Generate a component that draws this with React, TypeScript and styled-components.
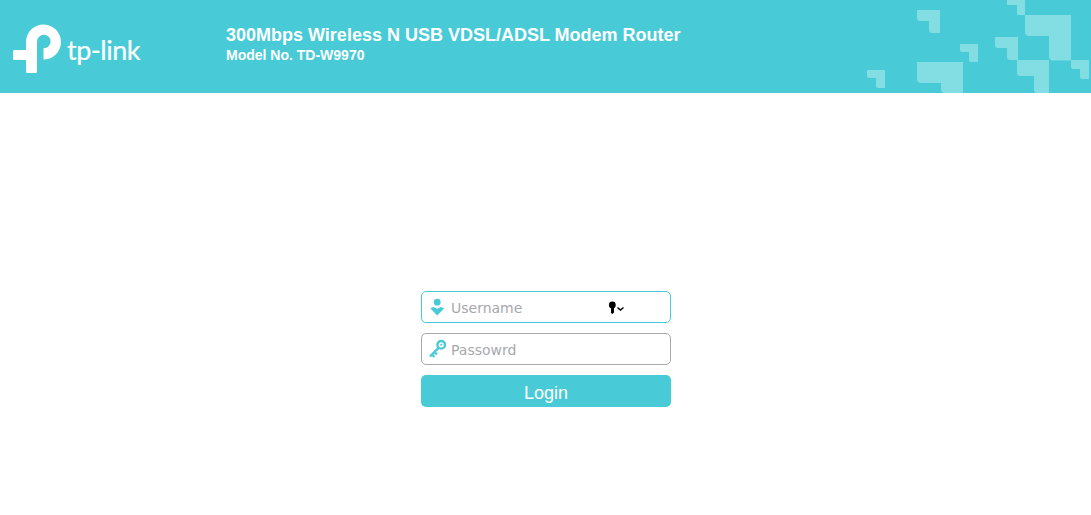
import React from "react";
import styled, { createGlobalStyle } from "styled-components";

const Global = createGlobalStyle`
  html, body { margin: 0; padding: 0; background: #fff; }
  body { font-family: "Liberation Sans", Arial, sans-serif; }
`;

const Page = styled.div`
  min-height: 515px;
  display: flex;
  flex-direction: column;
`;

const Header = styled.header`
  position: relative;
  height: 93px;
  background: #48cbd6;
  display: flex;
  align-items: center;
  overflow: hidden;
`;

const Pattern = styled.svg`
  position: absolute;
  top: 0;
  right: 0;
  width: 241px;
  height: 93px;
`;

const LogoBlock = styled.div`
  width: 226px;
  height: 93px;
  flex: none;
  display: flex;
  align-items: flex-start;
  padding: 24px 0 0 13px;
  box-sizing: border-box;
`;

const LogoMark = styled.svg`
  width: 48px;
  height: 49px;
  flex: none;
`;

const LogoWord = styled.span`
  font-family: "Lato", sans-serif;
  font-weight: 400;
  font-size: 27px;
  line-height: 32px;
  letter-spacing: -0.5px;
  -webkit-text-stroke: 0.2px #fff;
  color: #fff;
  margin: 10px 0 0 6px;
`;

const Titles = styled.div`
  color: #fff;
  font-weight: 700;
  margin-top: -5px;
`;

const Title = styled.div`
  font-size: 18px;
  line-height: 22px;
  margin-top: 1px;
`;

const Model = styled.div`
  font-size: 14px;
  line-height: 20px;
  margin-top: -1px;
`;

const Main = styled.main`
  display: flex;
  justify-content: center;
  padding-top: 198px;
`;

const Form = styled.form`
  width: 250px;
  margin-left: 1px;
  display: flex;
  flex-direction: column;
  gap: 10px;
`;

const Field = styled.label<{ $active?: boolean }>`
  height: 32px;
  box-sizing: border-box;
  border: 1px solid ${(p) => (p.$active ? "#48cbd6" : "#a7a9ac")};
  border-radius: 5px;
  display: flex;
  align-items: center;
  background: #fff;
`;

const FieldIcon = styled.svg`
  width: 28px;
  height: 30px;
  flex: none;
  margin-right: 1px;
`;

const Input = styled.input`
  flex: 1;
  min-width: 0;
  border: 0;
  outline: 0;
  padding: 2px 0 0;
  background: transparent;
  font-family: "DejaVu Sans", Verdana, sans-serif;
  font-size: 14px;
  color: #333;
  &::placeholder { color: #a7a9ac; opacity: 1; }
`;

const KeychainIcon = styled.svg`
  width: 17px;
  height: 14px;
  flex: none;
  margin-right: 46px;
`;

const Login = styled.button`
  height: 32px;
  border: 0;
  border-radius: 5px;
  background: #48cbd6;
  color: #fff;
  font-family: "Liberation Sans", Arial, sans-serif;
  font-size: 18px;
  padding: 4px 0 0;
`;

const elbows = [
  [157, 0, 175, 15, 8, 5, 1],
  [67, 10, 90, 33, 11, 11, 3],
  [175, 15, 221, 60.5, 22, 21, 4],
  [110, 44, 128, 62, 9, 8, 2],
  [145, 37, 168, 60, 11, 11, 3],
  [221, 60, 239, 79, 9, 9, 2],
  [167, 60, 199, 93, 15, 16, 3],
  [67, 62, 113, 93, 22, 21, 4],
  [17, 70, 35, 88, 9, 8, 2],
];

function elbowPath([x0, y0, x1, y1, tx, ty, r]: number[]) {
  return `M${x0} ${y0}H${x1}V${y1}H${x1 - tx + r}Q${x1 - tx} ${y1} ${x1 - tx} ${y1 - r}V${y0 + ty}H${x0 + r}Q${x0} ${y0 + ty} ${x0} ${y0 + ty - r}Z`;
}

export default function App() {
  return (
    <Page>
      <Global />
      <Header>
        <LogoBlock>
          <LogoMark viewBox="13 24 48 49">
            <path d="M14.5 50H36V60H14.5Q13 60 13 58.5V51.5Q13 50 14.5 50Z" fill="#fff" />
            <path
              d="M26 71.5V41.5A17.5 17.5 0 1 1 43.5 59.5V48.3A6.8 6.8 0 1 0 37 41.5V71.5Q37 73 35.5 73H27.5Q26 73 26 71.5Z"
              fill="#fff"
            />
          </LogoMark>
          <LogoWord>tp-link</LogoWord>
        </LogoBlock>
        <Titles>
          <Title>300Mbps Wireless N USB VDSL/ADSL Modem Router</Title>
          <Model>Model No. TD-W9970</Model>
        </Titles>
        <Pattern viewBox="0 0 241 93">
          {elbows.map((e, i) => (
            <path key={i} d={elbowPath(e)} fill="#82dee3" />
          ))}
        </Pattern>
      </Header>
      <Main>
        <Form onSubmit={(e) => e.preventDefault()}>
          <Field $active>
            <FieldIcon viewBox="0 0 28 30">
              <circle cx="15.2" cy="10.2" r="3.4" fill="#48cbd6" />
              <path d="M8.3 16.3L11.5 15L15.2 16.8L19 15L22.2 16.3L15.2 23.5Z" fill="#48cbd6" />
            </FieldIcon>
            <Input placeholder="Username" />
            <KeychainIcon viewBox="0 0 17 14">
              <circle cx="5.3" cy="5" r="3.4" fill="#000" />
              <path d="M4 7H7V12.5L5.5 14L4 13Z" fill="#000" />
              <path d="M10.5 7.5L13.5 10L16.5 7.5" fill="none" stroke="#000" strokeWidth="1.4" />
            </KeychainIcon>
          </Field>
          <Field>
            <FieldIcon viewBox="0 0 28 30">
              <circle cx="19.2" cy="10.8" r="3.8" fill="none" stroke="#48cbd6" strokeWidth="2.4" />
              <circle cx="19.2" cy="10.8" r="1" fill="#48cbd6" />
              <path d="M16.5 13.8L8 22.5M10 20.5L12.5 23M12.5 18L15 20.5" fill="none" stroke="#48cbd6" strokeWidth="2.4" />
            </FieldIcon>
            <Input type="password" placeholder="Passowrd" />
          </Field>
          <Login type="submit">Login</Login>
        </Form>
      </Main>
    </Page>
  );
}
